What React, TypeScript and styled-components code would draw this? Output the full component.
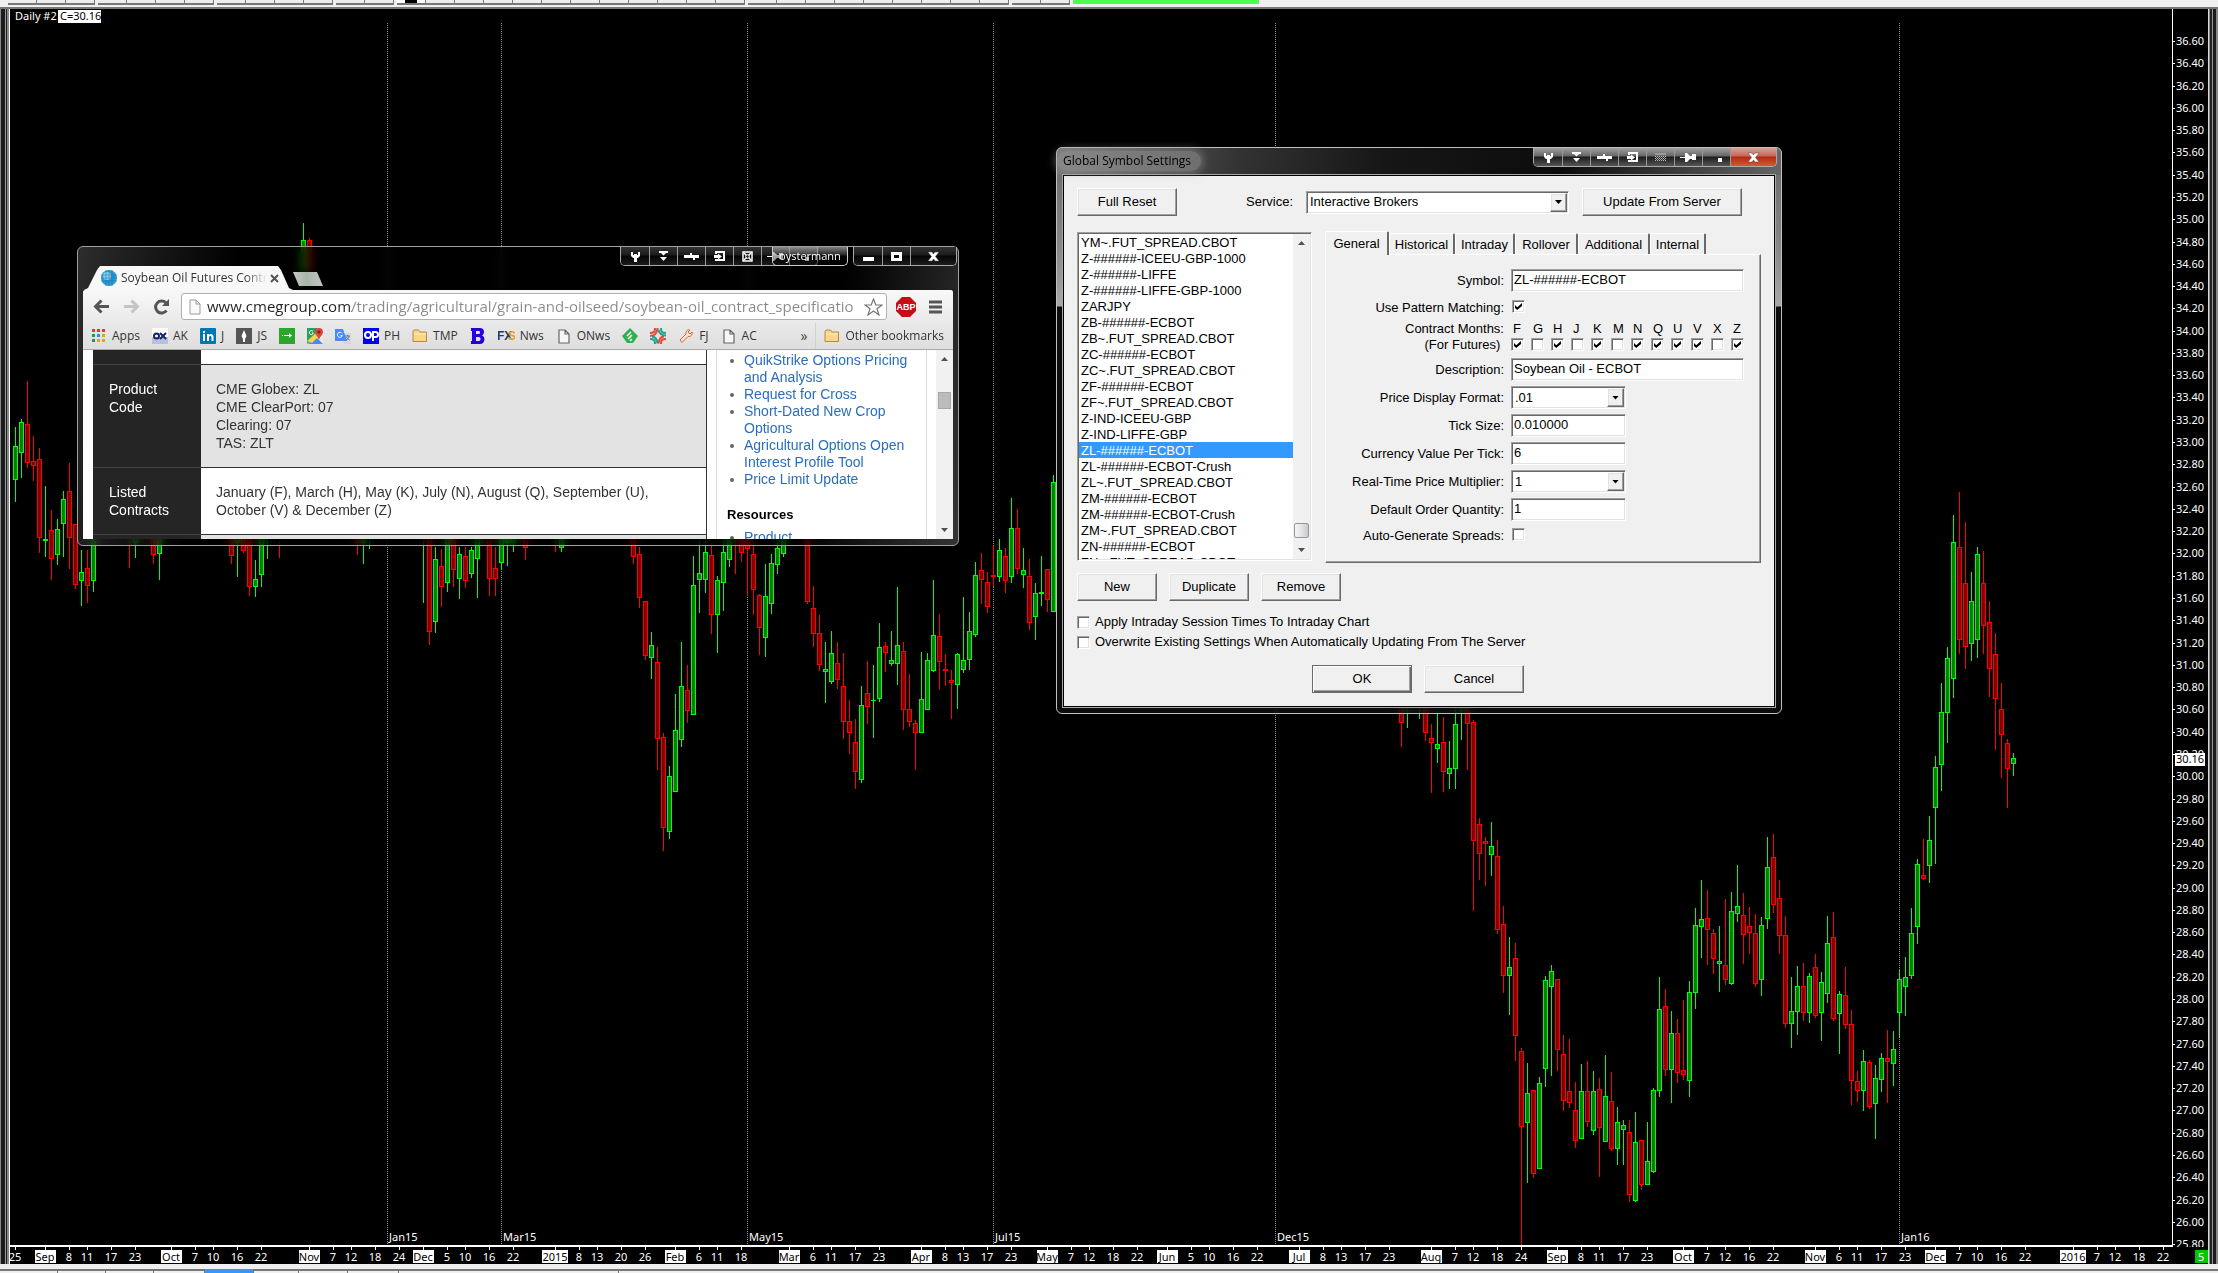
import React from "react";
import styled, { createGlobalStyle, css } from "styled-components";

const UI = `"Liberation Sans", Arial, sans-serif`;
const SEGOE = `"Open Sans", "Noto Sans", sans-serif`;
const TAHOMA = `"Noto Sans", sans-serif`;

const GlobalStyle = createGlobalStyle`
  *, *::before, *::after { box-sizing: border-box; }
  html, body, #root { height: 100%; }
  body { margin: 0; background: #000; font: 13px/16px ${UI}; color: #000; overflow: hidden; }
  button, input, select { font: inherit; color: inherit; margin: 0; padding: 0; border: 0; border-radius: 0; background: none; }
  ul { margin: 0; padding: 0; list-style: none; }
  svg { display: block; }
`;

/* ---------- chart data ---------- */

type Bar = [slot: number, up: 0 | 1, high: number, top: number, bottom: number, low: number];
type Series = { origin: number; unit: number; bars: Bar[] };

const SLOT = 6;
const slotX = (slot: number) => 5 + slot * SLOT;

const series: Series[] = [
  {
    origin: 371,
    unit: 3,
    bars: [
      [0, 1, 140, 198, 300, 366], [1, 1, 117, 126, 219, 294], [2, 0, 2, 132, 249, 264], [3, 0, 168, 243, 258, 303],
      [4, 0, 204, 237, 474, 519], [5, 1, 318, 477, 483, 531], [6, 0, 390, 450, 537, 600], [7, 1, 417, 447, 525, 555],
      [8, 1, 333, 357, 432, 531], [9, 0, 249, 333, 474, 567], [10, 0, 432, 432, 615, 627], [11, 1, 510, 576, 603, 678],
      [12, 0, 510, 564, 618, 669], [13, 1, 450, 450, 603, 636], [19, 0, 480, 480, 480, 564], [20, 1, 460, 460, 490, 534],
      [23, 0, 450, 450, 525, 552], [24, 1, 450, 450, 522, 600], [36, 0, 450, 450, 528, 552], [37, 1, 450, 450, 490, 591],
      [38, 0, 450, 450, 513, 519], [39, 0, 450, 450, 621, 648], [40, 1, 540, 597, 621, 651], [41, 1, 450, 450, 585, 621],
      [42, 1, 480, 480, 480, 537], [44, 0, 480, 480, 480, 534], [48, 1, -471, -420, -330, -300], [49, 0, -426, -420, -330, -300],
      [57, 0, 470, 470, 490, 525], [58, 1, 470, 470, 490, 552], [59, 1, 480, 480, 480, 507], [68, 1, 480, 480, 480, 669],
      [69, 0, 450, 450, 756, 795], [70, 1, 501, 537, 726, 760], [71, 0, 507, 558, 621, 681], [72, 1, 450, 450, 609, 636],
      [73, 0, 450, 450, 570, 621], [74, 1, 501, 522, 597, 657], [75, 0, 501, 528, 603, 624], [76, 1, 501, 510, 582, 594],
      [77, 1, 450, 450, 537, 654], [79, 0, 450, 450, 597, 648], [80, 0, 501, 564, 597, 648], [81, 1, 450, 450, 549, 570],
      [82, 1, 450, 450, 490, 558], [83, 1, 450, 450, 490, 516], [85, 0, 450, 450, 504, 540], [90, 0, 480, 480, 480, 516],
    ],
  },
  {
    origin: 511,
    unit: 3,
    bars: [
      [91, 1, 30, 30, 84, 96], [103, 0, 30, 30, 111, 132], [104, 0, 80, 102, 234, 264], [105, 0, 243, 243, 408, 420],
      [106, 1, 336, 375, 414, 477], [107, 0, 381, 426, 657, 750], [108, 0, 639, 651, 924, 993], [109, 1, 738, 768, 936, 957],
      [110, 1, 522, 630, 816, 816], [111, 1, 366, 498, 660, 681], [112, 0, 435, 510, 573, 609], [113, 1, 108, 195, 585, 585],
      [114, 1, 60, 159, 180, 279], [115, 1, 60, 96, 180, 219], [116, 0, 60, 105, 285, 342], [117, 1, 168, 180, 285, 399],
      [118, 1, 60, 96, 189, 273], [119, 1, 30, 30, 120, 141], [120, 0, 60, 60, 60, 162], [121, 0, 30, 30, 99, 126],
      [122, 0, 30, 30, 87, 228], [123, 0, 60, 102, 210, 285], [124, 0, 222, 225, 324, 405], [125, 1, 132, 228, 354, 411],
      [126, 1, 102, 129, 252, 282], [127, 1, 60, 84, 135, 162], [128, 1, 30, 30, 102, 111], [132, 0, 30, 30, 246, 252],
      [133, 0, 198, 264, 342, 381], [134, 0, 285, 339, 435, 453], [135, 1, 366, 447, 456, 549], [136, 1, 333, 399, 486, 492],
      [137, 0, 366, 429, 480, 507], [138, 0, 399, 498, 606, 657], [139, 0, 540, 603, 639, 702], [140, 0, 597, 666, 756, 807],
      [141, 1, 498, 555, 780, 789], [142, 0, 423, 519, 561, 612], [143, 1, 435, 540, 543, 654], [144, 1, 309, 381, 537, 546],
      [145, 0, 366, 378, 399, 456], [146, 1, 333, 420, 432, 438], [147, 1, 201, 375, 432, 495], [148, 0, 366, 393, 570, 630],
      [149, 0, 462, 567, 606, 621], [150, 0, 600, 609, 639, 750], [151, 1, 396, 537, 639, 639], [152, 1, 399, 420, 570, 570],
      [153, 1, 180, 345, 453, 456], [154, 0, 282, 348, 426, 510], [155, 0, 402, 447, 453, 498], [156, 0, 450, 480, 489, 597],
      [157, 1, 399, 402, 495, 567], [158, 1, 231, 420, 450, 459], [159, 1, 276, 333, 420, 450], [160, 1, 126, 165, 345, 351],
      [161, 0, 99, 150, 180, 252], [162, 0, 156, 186, 261, 279], [163, 0, 78, 165, 171, 201], [164, 1, 57, 90, 171, 186],
      [165, 0, 84, 108, 183, 219], [166, 1, -66, 24, 171, 189], [167, 0, -33, 24, 147, 162], [168, 1, 84, 150, 165, 204],
      [169, 0, 117, 168, 309, 330], [170, 1, 189, 219, 291, 360], [171, 1, 108, 216, 222, 258], [172, 0, 147, 147, 240, 276],
      [173, 1, -135, -114, 276, 276],
    ],
  },
  {
    origin: 681,
    unit: 2.8,
    bars: [
      [231, 0, 0, 0, 92, 160], [232, 1, 0, 0, 50, 106], [234, 1, 40, 40, 40, 80], [235, 0, 0, 0, 120, 143],
      [236, 0, 95, 134, 148, 288], [237, 1, 60, 151, 165, 204], [238, 0, 76, 146, 230, 286], [239, 1, 143, 218, 235, 277],
      [240, 1, 30, 95, 221, 277], [241, 1, 0, 0, 50, 140], [242, 0, 0, 0, 95, 224], [243, 0, 84, 90, 423, 619],
      [244, 0, 358, 375, 459, 532], [245, 0, 412, 423, 431, 549], [246, 1, 370, 437, 462, 521], [247, 0, 420, 465, 672, 683],
      [248, 0, 605, 655, 801, 848], [249, 1, 692, 776, 801, 910], [250, 0, 708, 750, 969, 1039], [251, 0, 1002, 1011, 1224, 1560],
      [252, 1, 1044, 1128, 1212, 1380], [253, 0, 1120, 1120, 1355, 1366], [254, 1, 1084, 1100, 1341, 1341], [255, 1, 801, 812, 1061, 1112],
      [256, 1, 770, 787, 832, 1081], [257, 0, 809, 809, 1008, 1067], [258, 0, 966, 1019, 1151, 1179], [259, 0, 977, 1123, 1156, 1170],
      [260, 0, 1098, 1176, 1263, 1282], [261, 1, 1047, 1123, 1257, 1257], [262, 0, 1039, 1123, 1210, 1224], [263, 1, 1067, 1123, 1235, 1246],
      [264, 0, 1086, 1117, 1226, 1364], [265, 1, 1022, 1137, 1266, 1266], [266, 0, 1070, 1151, 1285, 1291], [267, 1, 1168, 1210, 1285, 1330],
      [268, 1, 1204, 1218, 1232, 1330], [269, 0, 1204, 1238, 1414, 1434], [270, 1, 1182, 1266, 1431, 1434], [271, 0, 1260, 1260, 1386, 1400],
      [272, 1, 1210, 1319, 1386, 1386], [273, 1, 1114, 1120, 1350, 1352], [274, 1, 804, 893, 1123, 1140], [275, 0, 837, 885, 1064, 1081],
      [276, 1, 899, 960, 1064, 1156], [277, 0, 921, 960, 1072, 1100], [278, 0, 868, 1064, 1078, 1092], [279, 1, 815, 846, 1095, 1140],
      [280, 1, 610, 658, 848, 893], [281, 1, 532, 641, 664, 750], [282, 0, 560, 638, 672, 770], [283, 0, 669, 680, 753, 795],
      [284, 1, 661, 759, 767, 846], [285, 0, 585, 770, 812, 826], [286, 1, 566, 619, 823, 826], [287, 1, 490, 605, 627, 650],
      [288, 0, 568, 630, 686, 767], [289, 0, 608, 661, 680, 739], [290, 0, 627, 680, 823, 832], [291, 1, 636, 658, 812, 857],
      [292, 1, 412, 496, 641, 669], [293, 0, 403, 468, 602, 624], [294, 0, 532, 582, 689, 739], [295, 0, 633, 686, 935, 946],
      [296, 1, 804, 899, 935, 1002], [297, 1, 773, 829, 902, 966], [298, 0, 764, 829, 904, 927], [299, 1, 792, 801, 904, 932],
      [300, 0, 739, 776, 913, 918], [301, 1, 790, 818, 904, 983], [302, 1, 633, 708, 851, 876], [303, 0, 622, 692, 921, 927],
      [304, 1, 843, 851, 907, 1019], [305, 0, 776, 854, 938, 949], [306, 0, 896, 935, 1095, 1162], [307, 0, 1067, 1095, 1123, 1154],
      [308, 1, 1008, 1039, 1123, 1179], [309, 0, 1036, 1042, 1168, 1173], [310, 1, 1050, 1086, 1159, 1257], [311, 1, 1016, 1030, 1092, 1126],
      [312, 0, 952, 1030, 1042, 1156], [313, 1, 955, 1005, 1047, 1109], [314, 1, 784, 809, 904, 974], [315, 1, 748, 804, 832, 913],
      [316, 1, 610, 680, 801, 809], [317, 1, 473, 487, 664, 711], [318, 0, 417, 518, 529, 532], [319, 1, 353, 420, 493, 540],
      [320, 1, 185, 216, 330, 487], [321, 1, -20, 62, 210, 283], [322, 1, -120, -90, 64, 148], [323, 1, -490, -415, -30, 22],
      [324, 0, -554, -400, -140, -100], [325, 0, -470, -300, -120, -60], [326, 1, -330, -250, -130, -80], [327, 1, -400, -380, -140, -90],
      [328, 0, -390, -300, -180, -100], [329, 0, -250, -190, -60, 20], [330, 0, -160, -100, 25, 168], [331, 0, -20, 53, 126, 246],
      [332, 0, 137, 148, 221, 330], [333, 1, 176, 190, 207, 241],
    ],
  },
];

const gridLines: [number, string][] = [[62, "Jan15"], [81, "Mar15"], [122, "May15"], [163, "Jul15"], [210, "Dec15"], [314, "Jan16"]];

const timeLabels: [number, string][] = [
  [0, "25"], [5, "Sep"], [9, "8"], [12, "11"], [16, "17"], [20, "23"], [26, "Oct"], [30, "7"], [33, "10"], [37, "16"], [41, "22"],
  [49, "Nov"], [53, "7"], [56, "12"], [60, "18"], [64, "24"], [68, "Dec"], [72, "5"], [75, "10"], [79, "16"], [83, "22"],
  [90, "2015"], [94, "8"], [97, "13"], [101, "20"], [105, "26"], [110, "Feb"], [114, "6"], [117, "11"], [121, "18"],
  [129, "Mar"], [133, "6"], [136, "11"], [140, "17"], [144, "23"], [151, "Apr"], [155, "8"], [158, "13"], [162, "17"], [166, "23"],
  [172, "May"], [176, "7"], [179, "12"], [183, "18"], [187, "22"], [192, "Jun"], [196, "5"], [199, "10"], [203, "16"], [207, "22"],
  [214, "Jul"], [218, "8"], [221, "13"], [225, "17"], [229, "23"], [236, "Aug"], [240, "7"], [243, "12"], [247, "18"], [251, "24"],
  [257, "Sep"], [261, "8"], [264, "11"], [268, "17"], [272, "23"], [278, "Oct"], [282, "7"], [285, "12"], [289, "16"], [293, "22"],
  [300, "Nov"], [304, "6"], [307, "11"], [311, "17"], [315, "23"], [320, "Dec"], [324, "7"], [327, "10"], [331, "16"], [335, "22"],
  [343, "2016"], [347, "7"], [350, "12"], [354, "18"], [358, "22"],
];

/* ---------- chart ---------- */

const Desktop = styled.div`
  position: relative;
  min-height: 100vh;
  display: flex;
  flex-direction: column;
  background: #000;
  overflow: hidden;
`;
const ToolStrip = styled.div`
  height: 9px;
  display: flex;
  gap: 3px;
  padding: 0 8px;
  background: #f0f0f0;
  border-bottom: 2px solid #777;
  overflow: hidden;
`;
const ToolGroup = styled.div`
  display: flex;
  height: 5px;
`;
const ToolButton = styled.button<{ $pressed?: boolean }>`
  width: 29px;
  height: 5px;
  border: solid #777;
  border-width: 0 1px 2px 0;
  background: ${(p) => (p.$pressed ? "linear-gradient(90deg, #fff 8px, #000 8px 20px, #fff 20px)" : "#ededed")};
`;
const ConnectedLight = styled.div`
  width: 186px;
  height: 4px;
  background: #4dff4d;
`;
const ChartRow = styled.div`
  flex: 1;
  min-height: 0;
  display: flex;
`;
const FrameEdge = styled.div<{ $right?: boolean }>`
  width: 10px;
  flex: none;
  background: ${(p) =>
    p.$right
      ? "linear-gradient(90deg, #ddd 1px, #888 1px 2px, #222 2px 4px, #999 4px 5px, #1a1c1d 5px 8px, #888 8px)"
      : "linear-gradient(90deg, #888 1px, #1a1c1d 1px 5px, #999 5px 6px, #222 6px 7px, #888 7px 9px, #fff 9px)"};
`;
const ChartPane = styled.div`
  flex: 1;
  min-width: 0;
  display: flex;
  flex-direction: column;
`;
const PlotRow = styled.div`
  flex: 1;
  min-height: 0;
  display: flex;
`;
const Plot = styled.svg`
  flex: 1;
  min-width: 0;
  height: 100%;
  border-bottom: 2px solid #fff;
  font: 11px ${TAHOMA};
`;
const PriceScale = styled.svg`
  flex: none;
  width: 36px;
  height: 100%;
  border-left: 1px solid #fff;
  font: 11px ${TAHOMA};
`;
const TimeScale = styled.svg`
  flex: none;
  width: 100%;
  height: 17px;
  font: 11px ${TAHOMA};
`;
const TabStrip = styled.div`
  height: 9px;
  flex: none;
  display: flex;
  padding: 5px 0 0 10px;
  background: linear-gradient(#f0f0f0 5px, #777 5px 7px, #f0f0f0 7px);
`;
const StripTab = styled.button<{ $w: number; $on?: boolean }>`
  width: ${(p) => p.$w}px;
  height: 4px;
  background: ${(p) => (p.$on ? "#3399ff" : "transparent")};
  border-right: 1px solid #777;
`;

function Candles() {
  return (
    <g shapeRendering="crispEdges">
      {series.flatMap((s) =>
        s.bars.map(([slot, up, high, top, bottom, low]) => {
          const y = (v: number) => s.origin + Math.round(v / s.unit);
          const x = slotX(slot);
          const h = y(bottom) - y(top);
          return (
            <g key={slot} fill={up ? "#00ff00" : "#ff0000"}>
              <rect x={x} y={y(high)} width={1} height={y(low) - y(high)} />
              {h > 0 && <rect x={x - 2} y={y(top)} width={5} height={h} />}
              {h > 2 && <rect x={x - 1} y={y(top) + 1} width={3} height={h - 2} fill={up ? "#008000" : "#800000"} />}
            </g>
          );
        })
      )}
    </g>
  );
}

function Chart() {
  const prices = Array.from({ length: 55 }, (_, i) => 36.6 - i * 0.2);
  const priceY = (p: number) => Math.round(32 + (36.6 - p) * 111.4);
  return (
    <ChartPane>
      <PlotRow>
        <Plot>
          <text x={5} y={11} fill="#fff">Daily #2</text>
          <rect x={48} y={1} width={43} height={13} fill="#fff" />
          <text x={50} y={11}>C=30.16</text>
          {gridLines.map(([slot, label]) => (
            <g key={label}>
              <line x1={slotX(slot) + 0.5} x2={slotX(slot) + 0.5} y1={14} y2={1240} stroke="#909090" strokeDasharray="1 1" shapeRendering="crispEdges" />
              <text x={slotX(slot) + 2} y={1232} fill="#fff">{label}</text>
            </g>
          ))}
          <Candles />
        </Plot>
        <PriceScale>
          {prices.map((p) => (
            <g key={p.toFixed(2)} fill="#fff">
              <rect x={0} y={priceY(p)} width={2} height={1} />
              <text x={3} y={priceY(p) + 4}>{p.toFixed(2)}</text>
            </g>
          ))}
          <rect x={2} y={744} width={30} height={13} fill="#fff" />
          <text x={3} y={754}>30.16</text>
        </PriceScale>
      </PlotRow>
      <TimeScale>
        {timeLabels.map(([slot, label]) => {
          const boxed = label.length > 2;
          const w = label.length === 4 ? 26 : 21;
          return (
            <g key={slot}>
              <rect x={slotX(slot)} y={0} width={1} height={3} fill="#fff" />
              {boxed && <rect x={slotX(slot) - Math.floor(w / 2)} y={3} width={w} height={13} fill="#fff" />}
              <text x={slotX(slot)} y={14} textAnchor="middle" fill={boxed ? "#000" : "#fff"}>{label}</text>
            </g>
          );
        })}
        <rect x={2185} y={3} width={13} height={13} fill="#00c800" />
        <text x={2188} y={14} fill="#fff">5</text>
      </TimeScale>
    </ChartPane>
  );
}

/* ---------- window chrome ---------- */

const Glass = styled.div`
  position: absolute;
  display: flex;
  flex-direction: column;
  border: 1px solid #a0a0a0;
  border-radius: 6px;
  backdrop-filter: blur(4px);
`;
const BrowserWindow = styled(Glass)`
  left: 77px;
  top: 246px;
  width: 882px;
  height: 300px;
  padding: 0 5px 6px;
  background: linear-gradient(100deg, rgba(60, 60, 60, 0.75), rgba(0, 0, 0, 0.5) 160px 760px, rgba(70, 70, 70, 0.75));
`;
const DialogWindow = styled(Glass)`
  left: 1056px;
  top: 147px;
  width: 726px;
  height: 567px;
  padding: 0 5px 5px;
  border-color: #c0c0c0;
  background:
    linear-gradient(90deg, #777, #333 180px, #161616 330px, #0c0c0c 70%, #666) 0 0 / 100% 27px no-repeat,
    linear-gradient(#666, #888 100px, #a8a8a8 158px, rgba(16, 18, 18, 0.7) 159px);
`;
const TitleRow = styled.div<{ $h: number; $reach: number }>`
  position: relative;
  height: ${(p) => p.$h}px;
  margin-right: -${(p) => p.$reach}px;
  flex: none;
  display: flex;
  justify-content: space-between;
`;
const DialogTitle = styled.h1`
  margin: 3px 0 0 -5px;
  padding: 0 10px 0 6px;
  height: 20px;
  border-radius: 10px;
  background: rgba(150, 150, 150, 0.55);
  box-shadow: 0 0 8px 2px rgba(150, 150, 150, 0.55);
  font: 12px/20px ${SEGOE};
`;
const CaptionGroups = styled.div<{ $gap: number }>`
  display: flex;
  align-items: flex-start;
  gap: ${(p) => p.$gap}px;
`;
const CaptionGroup = styled.div`
  display: flex;
  height: 19px;
  border: 1px solid #aaa;
  border-top: 0;
  border-radius: 0 0 5px 5px;
  overflow: hidden;
`;
const CaptionButton = styled.button<{ $w: number; $tone: "dark" | "grey" | "red" }>`
  width: ${(p) => p.$w}px;
  display: grid;
  place-items: center;
  color: #fff;
  background: ${(p) =>
    p.$tone === "red"
      ? "linear-gradient(#d9a195, #c4685a 8px, #b02a12 9px, #d8563a)"
      : p.$tone === "grey"
        ? "linear-gradient(#a0a0a0, #666 8px, #1c1c1c 9px, #555)"
        : "linear-gradient(#333, #1c1c1c 8px, #050505 9px, #1c1c1c)"};
  & + & { border-left: 1px solid #999; }
`;
const ProfileSpace = styled.span`
  width: 35px;
`;
const ProfileBadge = styled.span`
  position: absolute;
  right: 109px;
  top: 0;
  width: 76px;
  height: 19px;
  border: 1px solid #ccc;
  border-top: 0;
  border-radius: 0 0 5px 5px;
  background: linear-gradient(rgba(170, 170, 170, 0.75), rgba(90, 90, 90, 0.4) 8px, rgba(0, 0, 0, 0.4) 9px);
  color: #fff;
  font: 11px/18px ${SEGOE};
  text-align: center;
`;

type GlyphName = "wrench" | "roll" | "pan" | "enter" | "move" | "shade" | "pin" | "tray" | "min" | "max" | "close";

function Glyph({ name }: { name: GlyphName }) {
  const shapes: Record<GlyphName, React.ReactNode> = {
    wrench: <path d="M2 2v4l2 2h1v4h3V8h1l2-2V2H9v3H8V1H5v4H4V2z M5 1h3v3H5z" fillRule="evenodd" fill="currentColor" />,
    roll: <path d="M2 1h9v2H9L6.500 5.500 4 3H2zM3 7h7l-3.500 4z" fill="currentColor" />,
    pan: <path d="M-1 5h6V3h2v2h7v3h-4v2H8V8H-1z" fill="currentColor" />,
    enter: <path fillRule="evenodd" d="M2 1h10v10H2V9h2v0h6V3H4v1H2zM1 5h4V3.500L9 6.500 5 9.500V8H1z" fill="currentColor" />,
    move: (
      <g fill="none" stroke="currentColor">
        <rect x="2" y="2" width="9" height="9" strokeWidth="1.500" />
        <path d="M3 3l7 7M10 3l-7 7" strokeWidth="1.500" />
        <circle cx="6.500" cy="6.500" r="1.800" fill="#222" />
      </g>
    ),
    shade: (
      <g>
        <path d="M1 2h11v2H1z" fill="#999" />
        <path d="M1 5.500h11M1 7.500h11M1 9.500h11" stroke="#bbb" strokeDasharray="1 1" />
        <path d="M2 6.500h10M2 8.500h10" stroke="#999" strokeDasharray="1 1" />
      </g>
    ),
    pin: <path d="M-2 6h5V2h2l3 3h2V3h4v6h-4V8H8l-3 3H3V7h-5z" fill="currentColor" />,
    tray: <path d="M8 7h4v4H8z" fill="currentColor" />,
    min: <path d="M1 7h11v4H1z" fill="currentColor" />,
    max: <path fillRule="evenodd" d="M1 2h11v9H1zM4 5v3h5V5z" fill="currentColor" />,
    close: <path d="M1 2h4l1.500 2L8 2h4L8.500 6.500 12 11H8L6.500 9 5 11H1l3.500-4.500z" fill="currentColor" stroke="#445" strokeWidth="0.5" />,
  };
  return (
    <svg width="13" height="13" viewBox="0 0 13 13" overflow="visible" aria-hidden="true">
      {shapes[name]}
    </svg>
  );
}

function Caption({ names, tone }: { names: GlyphName[]; tone: "dark" | "grey" }) {
  return (
    <CaptionGroup>
      {names.map((n) => (
        <CaptionButton key={n} aria-label={n} $w={n === "close" ? 46 : 28} $tone={tone}>
          <Glyph name={n} />
        </CaptionButton>
      ))}
    </CaptionGroup>
  );
}

/* ---------- browser ---------- */

const PageTab = styled.div`
  position: relative;
  align-self: flex-end;
  display: flex;
  align-items: center;
  width: 209px;
  height: 24px;
  margin-left: 1px;
  padding: 0 14px 0 17px;
  clip-path: polygon(0 100%, 4px 92%, 13px 4px, 16px 0, 194px 0, 197px 4px, 205px 92%, 100% 100%);
  background: #f8f8f8;
  font: 12px/24px ${SEGOE};
  color: #333;
`;
const PageTabTitle = styled.span`
  flex: 1;
  min-width: 0;
  margin: 0 3px 0 4px;
  overflow: hidden;
  white-space: nowrap;
  mask-image: linear-gradient(90deg, #000 85%, transparent);
`;
const NewTab = styled.button`
  width: 30px;
  height: 14px;
  align-self: flex-end;
  margin: 0 auto 4px 0;
  clip-path: polygon(0 0, 80% 0, 100% 100%, 20% 100%);
  background: linear-gradient(90deg, #c8c8c8, #a9b5a9 45%, #c4c4c4);
`;
const Client = styled.div`
  flex: 1;
  min-height: 0;
  display: flex;
  flex-direction: column;
  background: #fff;
  border-radius: 3px 3px 0 0;
  overflow: hidden;
`;
const NavBar = styled.div`
  height: 33px;
  flex: none;
  display: flex;
  align-items: center;
  gap: 13px;
  padding: 0 11px 0 10px;
  background: linear-gradient(#f8f8f8, #e9e9e9);
`;
const IconButton = styled.button`
  display: grid;
  place-items: center;
  flex: none;
`;
const Address = styled.label`
  flex: 1;
  min-width: 0;
  height: 27px;
  margin: 0 -4px 0 -2px;
  padding: 0 3px 0 7px;
  display: flex;
  align-items: center;
  gap: 6px;
  border: 1px solid #b0b0b0;
  border-radius: 3px;
  background: #fff;
`;
const AddressInput = styled.input`
  flex: 1;
  min-width: 0;
  height: 25px;
  font: 15px/25px ${SEGOE};
  outline: 0;
  color: transparent;
  background: linear-gradient(90deg, #222 145px, #8a8a8a 145px);
  background-clip: text;
  -webkit-background-clip: text;
`;
const Bookmarks = styled.nav`
  height: 27px;
  flex: none;
  display: flex;
  align-items: center;
  gap: 12px;
  padding: 0 9px;
  background: linear-gradient(#e9e9e9, #dedede);
  border-bottom: 1px solid #aaa;
`;
const Bookmark = styled.a`
  display: flex;
  align-items: center;
  gap: 5px;
  font: 12px/16px ${SEGOE};
  color: #333;
  text-decoration: none;
  white-space: nowrap;
`;
const MoreBookmarks = styled.button`
  margin-left: auto;
  font: 14px/16px ${SEGOE};
  color: #444;
`;
const BookmarkDivider = styled.span`
  width: 1px;
  height: 26px;
  margin: 0 -4px;
  background: #ccd3d8;
`;
const WebPage = styled.div`
  flex: 1;
  min-height: 0;
  display: flex;
  padding-left: 10px;
  overflow: hidden;
`;
const SpecTable = styled.table`
  flex: 1;
  height: 253px;
  margin-top: -52px;
  border-collapse: collapse;
  font: 14px/18px ${UI};
  color: #333;
  th, td { vertical-align: top; text-align: left; border-top: 1px solid #333; padding: 15px; font-weight: 400; }
  th { width: 108px; padding-left: 16px; background: #252525; color: #fff; border-color: #444; }
  td { border-right: 1px solid #333; }
`;
const SpecRow = styled.tr<{ $h: number; $shade?: boolean }>`
  height: ${(p) => p.$h}px;
  td { background: ${(p) => (p.$shade ? "#e3e3e3" : "#fff")}; }
`;
const SideBox = styled.aside`
  width: 211px;
  flex: none;
  margin: 0 9px;
  padding: 2px 11px 0 10px;
  border: solid #ddd;
  border-width: 0 1px;
  font: 14px/17px ${UI};
  overflow: hidden;
`;
const LinkList = styled.ul`
  li { position: relative; padding-left: 17px; }
  li::before { content: ""; position: absolute; left: 3px; top: 7px; width: 4px; height: 4px; border-radius: 50%; background: #666; }
  a { color: #2a6ebb; text-decoration: none; }
`;
const SideHeading = styled.h2`
  margin: 18px 0 6px;
  font: bold 13px/17px ${UI};
`;
const PageScroll = styled.div`
  width: 17px;
  flex: none;
  display: flex;
  flex-direction: column;
  align-items: center;
  background: #f1f1f1;
`;
const ScrollArrow = styled.button<{ $down?: boolean }>`
  width: 17px;
  height: 18px;
  flex: none;
  display: grid;
  place-items: center;
  &::before {
    content: "";
    width: 7px;
    height: 4px;
    background: #505050;
    clip-path: ${(p) => (p.$down ? "polygon(0 0, 100% 0, 50% 100%)" : "polygon(0 100%, 100% 100%, 50% 0)")};
  }
`;
const PageThumb = styled.div`
  width: 13px;
  height: 17px;
  margin: 24px 0 auto;
  background: #bcbcbc;
  border: 1px solid #a8a8a8;
`;

const folder = (
  <svg width="16" height="14" viewBox="0 0 16 14"><path d="M1 12V2.500L2 1h4.500l1.500 2h6.500v9.500H1z" fill="#fbd58c" stroke="#b98a3c" /><path d="M2 5h12" stroke="#fff0c8" /></svg>
);
const sheet = (
  <svg width="16" height="15" viewBox="-2 0 16 15"><path d="M1 1h6l4 4v9H1zM7 1v4h4" fill="#f6f6f6" stroke="#666" strokeWidth="1.200" /></svg>
);
const IconText = styled.text`
  font: bold 12px ${UI};
`;
const BlockerText = styled.text`
  font: bold 9px ${UI};
`;

const bookmarkItems: { id: string; label?: string; icon: React.ReactNode }[] = [
  {
    id: "apps", label: "Apps",
    icon: (
      <svg width="15" height="14" viewBox="0 0 15 14">
        {["#e33", "#e33", "#e33", "#2a8f5a", "#3b82f6", "#e9a400", "#2a8f5a", "#e9a400", "#e9a400"].map((c, i) => (
          <rect key={i} x={(i % 3) * 5} y={Math.floor(i / 3) * 5} width="3" height="3" fill={c} />
        ))}
      </svg>
    ),
  },
  { id: "ak", label: "AK", icon: <svg width="16" height="16"><rect width="16" height="9" fill="#fff" /><rect y="9" width="16" height="7" fill="#b9bfe0" /><g fill="none" stroke="#14246b" strokeWidth="2"><circle cx="4.500" cy="8" r="2.500" /><path d="M8 5l6 6M14 5l-6 6" /></g></svg> },
  { id: "in", label: "J", icon: <svg width="16" height="16"><rect width="16" height="16" rx="1" fill="#0077b5" /><path d="M3 6h2v7H3zM3 3h2v2H3zM7 6h2v1c1-1.500 4.500-1.500 4.500 2v4h-2V9.500c0-2-2.500-2-2.500 0V13H7z" fill="#fff" /></svg> },
  { id: "js", label: "JS", icon: <svg width="16" height="16"><rect width="16" height="16" fill="#555" /><path d="M8 2l2.500 6L9 11v3H7v-3L5.500 8z" fill="#fff" /></svg> },
  { id: "arrow", icon: <svg width="16" height="16"><rect width="16" height="16" fill="#2ba52b" /><path d="M3 7h1v1H3zM5 7h5V5l3 2.500L10 10V8H5z" fill="#fff" /></svg> },
  { id: "maps", icon: <svg width="16" height="16"><rect width="16" height="16" fill="#e8e8e8" /><path d="M0 0h10v7L0 16z" fill="#26a05a" /><path d="M1 16l7-8 8 8z" fill="#4a8af4" /><path d="M0 13L9 5l3 3-7 7z" fill="#fbd34c" /><path d="M12 0a4 4 0 0 1 4 4c0 3-3 4-4 8-1-4-4-5-4-8a4 4 0 0 1 4-4z" fill="#dc4437" /><circle cx="12" cy="4" r="1.500" fill="#7b2018" /><path d="M6 3.500a2 2 0 1 0 .3 1.500H5" fill="none" stroke="#fff" /></svg> },
  { id: "translate", icon: <svg width="16" height="16"><path d="M6 5h10v11h-7z" fill="#d5d8dc" /><path d="M0 1h8l4 12H0z" fill="#4a8af4" /><path d="M7 5.500a2.500 2.500 0 1 0 .3 2H5.500" fill="none" stroke="#fff" /><path d="M10 8h5M12.500 7v1M14 8c0 2-2 4-3 4M11.500 9c.5 1.500 2 2.500 3 3" stroke="#678" fill="none" /></svg> },
  { id: "ph", label: "PH", icon: <svg width="16" height="16"><rect width="16" height="16" fill="#0000f0" /><g fill="none" stroke="#fff" strokeWidth="2"><circle cx="5" cy="7" r="3" /><path d="M10 13V4h2.500a2 2 0 0 1 0 5H10" /></g></svg> },
  { id: "tmp", label: "TMP", icon: folder },
  { id: "b", icon: <svg width="16" height="16"><path fillRule="evenodd" d="M1 0h9c5 0 5 6 2 7.500 4 1.500 3 8.500-2 8.500H1v-3h1V3H1zM6 3v3h3c1.500 0 1.500-3 0-3zM6 9v4h3c2 0 2-4 0-4z" fill="#2a00d8" /></svg> },
  { id: "fxs", label: "Nws", icon: <svg width="17" height="16"><IconText x="-1" y="12" fill="#1d3a5f">FX</IconText><IconText x="10" y="12" fill="#f39a1c">S</IconText></svg> },
  { id: "onws", label: "ONws", icon: sheet },
  { id: "feed", icon: <svg width="16" height="16"><path d="M8 0l8 8-5 7H5L0 8z" fill="#2bb24c" /><path d="M5 8l4-4M6 11l4-4M8 13l2-2" stroke="#fff" strokeWidth="1.500" /></svg> },
  { id: "knot", icon: <svg width="16" height="16" fill="none" strokeWidth="2"><path d="M0 5c4 0 5-1 5-5M0 8c5 0 7-2 7.500-8" stroke="#e3483c" /><path d="M16 5c-4 0-5-1-5-5M16 7.500c-5 0-7-2-7.500-6" stroke="#21a28a" /><path d="M0 11c4 0 5 1 5 5M2 8.500c4 0 5 3 5.500 7" stroke="#21a28a" /><path d="M16 11c-4 0-5 1-5 5M14 8.500c-4 0-5 3-5.500 7" stroke="#e3483c" /></svg> },
  { id: "fj", label: "FJ", icon: <svg width="16" height="14" viewBox="-1 0 16 14"><path d="M1 11l6-6c-.5-3 2-5 4-4L9 3l2 2 2-2c1 3-1.500 5-4 4.500L3 13.500z" fill="#fbe3d6" stroke="#d8643a" /></svg> },
  { id: "ac", label: "AC", icon: sheet },
];

const sideLinks = ["QuikStrike Options Pricing and Analysis", "Request for Cross", "Short-Dated New Crop Options", "Agricultural Options Open Interest Profile Tool", "Price Limit Update"];

function Browser() {
  return (
    <BrowserWindow>
      <TitleRow $h={43} $reach={4}>
        <PageTab>
          <svg width="16" height="16" viewBox="0 0 16 16">
            <circle cx="8" cy="8" r="8" fill="#2a9bd6" />
            <circle cx="6" cy="6" r="4" fill="#8fd0f0" />
            <path d="M0 5h16M0 8h16M0 11h16M5 0v16M8 0v16M11 0v16" stroke="#1c6fa8" strokeWidth="0.5" />
          </svg>
          <PageTabTitle>Soybean Oil Futures Contr</PageTabTitle>
          <IconButton aria-label="Close tab">
            <svg width="9" height="9"><path d="M1 1l7 7M8 1L1 8" stroke="#555" strokeWidth="2" /></svg>
          </IconButton>
        </PageTab>
        <NewTab aria-label="New tab" />
        <CaptionGroups $gap={10}>
          <Caption names={["wrench", "roll", "pan", "enter", "move", "pin", "tray"]} tone="dark" />
        </CaptionGroups>
        <ProfileSpace />
        <CaptionGroups $gap={0}>
          <Caption names={["min", "max", "close"]} tone="dark" />
        </CaptionGroups>
        <ProfileBadge>oystermann</ProfileBadge>
      </TitleRow>
      <Client>
        <NavBar>
          <IconButton aria-label="Back"><svg width="17" height="15"><path d="M16 7.500H3M8.500 1.500l-6 6 6 6" fill="none" stroke="#555" strokeWidth="3" /></svg></IconButton>
          <IconButton aria-label="Forward"><svg width="17" height="15"><path d="M1 7.500h13M8.500 1.500l6 6-6 6" fill="none" stroke="#c4c4c4" strokeWidth="3" /></svg></IconButton>
          <IconButton aria-label="Reload"><svg width="17" height="16"><path d="M13.500 11.500a6 6 0 1 1-.5-7.500" fill="none" stroke="#555" strokeWidth="3" /><path d="M16 0v7H9z" fill="#555" /></svg></IconButton>
          <Address>
            <svg width="12" height="16"><path d="M1 1h6l4 4v10H1zM7 1v4h4" fill="#fafafa" stroke="#999" /></svg>
            <AddressInput aria-label="Address" defaultValue="www.cmegroup.com/trading/agricultural/grain-and-oilseed/soybean-oil_contract_specificatio" />
            <svg width="19" height="18" viewBox="0 0 19 18"><path d="M9.500 1l2.300 6H18l-5 3.700 2 6.300-5.500-4L4 17l2-6.300L1 7h6.200z" fill="#fff" stroke="#777" strokeWidth="1.200" /></svg>
          </Address>
          <IconButton aria-label="Ad blocker">
            <svg width="20" height="20">
              <path d="M6 0h8l6 6v8l-6 6H6l-6-6V6z" fill="#c70d12" />
              <BlockerText x="10" y="13" fill="#fff" textAnchor="middle">ABP</BlockerText>
            </svg>
          </IconButton>
          <IconButton aria-label="Menu"><svg width="13" height="14"><path d="M0 2h13M0 7h13M0 12h13" stroke="#555" strokeWidth="3" /></svg></IconButton>
        </NavBar>
        <Bookmarks>
          {bookmarkItems.map((b) => (
            <Bookmark key={b.id} href="#" aria-label={b.label ?? b.id}>
              {b.icon}
              {b.label}
            </Bookmark>
          ))}
          <MoreBookmarks aria-label="More bookmarks">»</MoreBookmarks>
          <BookmarkDivider />
          <Bookmark href="#">{folder}Other bookmarks</Bookmark>
        </Bookmarks>
        <WebPage>
          <SpecTable>
            <tbody>
              <SpecRow $h={66}><th /><td /></SpecRow>
              <SpecRow $h={103} $shade>
                <th scope="row">Product Code</th>
                <td>CME Globex: ZL<br />CME ClearPort: 07<br />Clearing: 07<br />TAS: ZLT</td>
              </SpecRow>
              <SpecRow $h={67}>
                <th scope="row">Listed Contracts</th>
                <td>January (F), March (H), May (K), July (N), August (Q), September (U),<br />October (V) &amp; December (Z)</td>
              </SpecRow>
              <SpecRow $h={17} $shade><th /><td /></SpecRow>
            </tbody>
          </SpecTable>
          <SideBox>
            <LinkList>
              {sideLinks.map((t) => <li key={t}><a href="#">{t}</a></li>)}
            </LinkList>
            <SideHeading>Resources</SideHeading>
            <LinkList><li><a href="#">Product</a></li></LinkList>
          </SideBox>
          <PageScroll>
            <ScrollArrow aria-label="Scroll up" />
            <PageThumb />
            <ScrollArrow aria-label="Scroll down" $down />
          </PageScroll>
        </WebPage>
      </Client>
    </BrowserWindow>
  );
}

/* ---------- settings dialog ---------- */

const raised = css`
  border: 1px solid;
  border-color: #fff #696969 #696969 #fff;
  box-shadow: inset -1px -1px #a0a0a0, inset 1px 1px #e3e3e3;
  background: #f0f0f0;
`;
const sunken = css`
  border: 1px solid;
  border-color: #a0a0a0 #fff #fff #a0a0a0;
  box-shadow: inset 1px 1px #696969, inset -1px -1px #e3e3e3;
  background: #fff;
`;
const DialogBody = styled.form`
  flex: 1;
  min-height: 0;
  display: flex;
  flex-direction: column;
  padding: 13px 14px;
  border: 1px solid #a8a8a8;
  outline: 1px solid #000;
  outline-offset: -2px;
  background: #f0f0f0;
`;
const Push = styled.button<{ $w: number; $default?: boolean }>`
  ${raised}
  width: ${(p) => p.$w}px;
  height: 28px;
  ${(p) => p.$default && css`border-color: #696969; box-shadow: inset 1px 1px #fff, inset -1px -1px #696969, inset -2px -2px #a0a0a0;`}
`;
const Row = styled.div<{ $gap: number; $top?: number; $center?: boolean; $end?: number }>`
  display: flex;
  align-items: center;
  gap: ${(p) => p.$gap}px;
  margin-top: ${(p) => p.$top ?? 0}px;
  padding-right: ${(p) => p.$end ?? 0}px;
  justify-content: ${(p) => (p.$center ? "center" : "flex-start")};
`;
const ServiceLabel = styled.label`
  margin-left: auto;
`;
const Combo = styled.span<{ $w: number }>`
  ${sunken}
  width: ${(p) => p.$w}px;
  height: 23px;
  display: flex;
  padding: 1px;
  position: relative;
`;
const ComboSelect = styled.select`
  appearance: none;
  width: 100%;
  padding: 0 20px 0 2px;
  outline: 0;
`;
const ComboArrow = styled.span`
  ${raised}
  position: absolute;
  right: 1px;
  top: 1px;
  width: 17px;
  height: 19px;
  display: grid;
  place-items: center;
  pointer-events: none;
  &::before { content: ""; width: 7px; height: 4px; background: #000; clip-path: polygon(0 0, 100% 0, 50% 100%); }
`;
const Columns = styled.div`
  display: flex;
  justify-content: space-between;
  align-items: flex-end;
  margin-top: 15px;
  height: 330px;
`;
const ListBox = styled.div`
  ${sunken}
  width: 235px;
  height: 329px;
  display: flex;
  padding: 1px;
`;
const Items = styled.ul`
  flex: 1;
  overflow: hidden;
  white-space: nowrap;
`;
const Item = styled.li<{ $on?: boolean }>`
  height: 16px;
  padding: 0 2px;
  line-height: 18px;
  ${(p) => p.$on && css`background: #3399ff; color: #fff;`}
`;
const ListThumb = styled.div`
  width: 15px;
  height: 15px;
  margin: auto 0 3px;
  border: 1px solid #979797;
  border-radius: 2px;
  background: linear-gradient(90deg, #f5f5f5, #e4e4e6 50%, #c8c9cf);
`;
const TabArea = styled.div`
  width: 436px;
  display: flex;
  flex-direction: column;
  height: 330px;
`;
const TabRow = styled.div`
  display: flex;
  align-items: flex-end;
  height: 24px;
  position: relative;
  z-index: 1;
`;
const TabButton = styled.button<{ $on?: boolean; $w: number }>`
  width: ${(p) => p.$w}px;
  height: ${(p) => (p.$on ? 24 : 21)}px;
  margin-bottom: ${(p) => (p.$on ? -1 : 0)}px;
  padding-top: ${(p) => (p.$on ? 0 : 2)}px;
  background: #f0f0f0;
  border: solid;
  border-width: 1px 2px 0 1px;
  border-color: #fff #696969 #fff #fff;
  border-radius: 2px 2px 0 0;
`;
const Panel = styled.div`
  flex: 1;
  border: 1px solid;
  border-color: #fff #696969 #696969 #fff;
  box-shadow: inset -1px -1px #a0a0a0;
  padding: 14px 16px;
  display: grid;
  grid-template-columns: 162px 1fr;
  column-gap: 7px;
  align-content: start;
`;
const FieldLabel = styled.label`
  text-align: right;
  line-height: 23px;
  white-space: nowrap;
`;
const MonthsLabel = styled.div`
  text-align: right;
  line-height: 16px;
  padding-top: 1px;
`;
const Cell = styled.div<{ $h: number }>`
  height: ${(p) => p.$h}px;
`;
const TextBox = styled.input<{ $w: number }>`
  ${sunken}
  width: ${(p) => p.$w}px;
  height: 23px;
  padding: 0 2px 2px;
  outline: 0;
`;
const Tick = styled.input`
  ${sunken}
  appearance: none;
  display: block;
  width: 13px;
  height: 13px;
  flex: none;
  &:checked::before {
    content: "";
    display: block;
    width: 7px;
    height: 7px;
    margin: 2px;
    background: #000;
    clip-path: polygon(0 28%, 32% 60%, 100% 0, 100% 42%, 32% 100%, 0 70%);
  }
`;
const TickCell = styled.div<{ $h: number }>`
  height: ${(p) => p.$h}px;
  padding: 4px 0 0 1px;
`;
const Months = styled.div`
  display: grid;
  grid-template-columns: repeat(12, 20px);
  height: 38px;
`;
const Month = styled.label`
  display: flex;
  flex-direction: column;
  gap: 1px;
  line-height: 16px;
  padding-top: 1px;
  text-indent: 2px;
`;
const CheckLine = styled.label`
  display: flex;
  align-items: center;
  gap: 5px;
  height: 20px;
`;

const symbols = [
  "YM~.FUT_SPREAD.CBOT", "Z-######-ICEEU-GBP-1000", "Z-######-LIFFE", "Z-######-LIFFE-GBP-1000", "ZARJPY", "ZB-######-ECBOT",
  "ZB~.FUT_SPREAD.CBOT", "ZC-######-ECBOT", "ZC~.FUT_SPREAD.CBOT", "ZF-######-ECBOT", "ZF~.FUT_SPREAD.CBOT", "Z-IND-ICEEU-GBP",
  "Z-IND-LIFFE-GBP", "ZL-######-ECBOT", "ZL-######-ECBOT-Crush", "ZL~.FUT_SPREAD.CBOT", "ZM-######-ECBOT", "ZM-######-ECBOT-Crush",
  "ZM~.FUT_SPREAD.CBOT", "ZN-######-ECBOT", "ZN~.FUT_SPREAD.CBOT",
];
const settingTabs: [string, number][] = [["General", 64], ["Historical", 66], ["Intraday", 60], ["Rollover", 63], ["Additional", 72], ["Internal", 56]];
const activeMonths = "FHKNQUVZ";

function ComboBox({ id, w, value }: { id: string; w: number; value: string }) {
  return (
    <Combo $w={w}>
      <ComboSelect id={id} defaultValue={value}><option>{value}</option></ComboSelect>
      <ComboArrow />
    </Combo>
  );
}

function Field({ id, label, value, wide, combo, h = 28 }: { id: string; label: string; value: string; wide?: boolean; combo?: boolean; h?: number }) {
  return (
    <>
      <FieldLabel htmlFor={id}>{label}</FieldLabel>
      <Cell $h={h}>{combo ? <ComboBox id={id} w={115} value={value} /> : <TextBox id={id} $w={wide ? 233 : 115} defaultValue={value} />}</Cell>
    </>
  );
}

function SettingsDialog() {
  return (
    <DialogWindow role="dialog" aria-label="Global Symbol Settings">
      <TitleRow $h={26} $reach={1}>
        <DialogTitle>Global Symbol Settings</DialogTitle>
        <CaptionGroup>
          {(["wrench", "roll", "pan", "enter", "shade", "pin", "tray"] as GlyphName[]).map((n) => (
            <CaptionButton key={n} type="button" aria-label={n} $w={28} $tone="grey"><Glyph name={n} /></CaptionButton>
          ))}
          <CaptionButton type="button" aria-label="Close" $w={46} $tone="red"><Glyph name="close" /></CaptionButton>
        </CaptionGroup>
      </TitleRow>
      <DialogBody onSubmit={(e) => e.preventDefault()}>
        <Row $gap={13} $end={19}>
          <Push type="button" $w={100}>Full Reset</Push>
          <ServiceLabel htmlFor="service">Service:</ServiceLabel>
          <ComboBox id="service" w={263} value="Interactive Brokers" />
          <Push type="button" $w={160}>Update From Server</Push>
        </Row>
        <Columns>
          <ListBox>
            <Items role="listbox" aria-label="Symbols">
              {symbols.map((s) => <Item key={s} role="option" aria-selected={s === "ZL-######-ECBOT"} $on={s === "ZL-######-ECBOT"}>{s}</Item>)}
            </Items>
            <PageScroll>
              <ScrollArrow type="button" aria-label="Scroll up" />
              <ListThumb />
              <ScrollArrow type="button" aria-label="Scroll down" $down />
            </PageScroll>
          </ListBox>
          <TabArea>
            <TabRow role="tablist">
              {settingTabs.map(([t, w], i) => <TabButton key={t} type="button" role="tab" aria-selected={i === 0} $on={i === 0} $w={w}>{t}</TabButton>)}
            </TabRow>
            <Panel>
              <Field id="symbol" label="Symbol:" value="ZL-######-ECBOT" wide h={27} />
              <FieldLabel htmlFor="pattern">Use Pattern Matching:</FieldLabel>
              <TickCell $h={24}><Tick id="pattern" type="checkbox" defaultChecked /></TickCell>
              <MonthsLabel>Contract Months:<br />(For Futures)&nbsp;</MonthsLabel>
              <Months>
                {"FGHJKMNQUVXZ".split("").map((m) => (
                  <Month key={m}>{m}<Tick type="checkbox" defaultChecked={activeMonths.includes(m)} /></Month>
                ))}
              </Months>
              <Field id="description" label="Description:" value="Soybean Oil - ECBOT" wide />
              <Field id="format" label="Price Display Format:" value=".01" combo />
              <Field id="tick" label="Tick Size:" value="0.010000" />
              <Field id="currency" label="Currency Value Per Tick:" value="6" />
              <Field id="multiplier" label="Real-Time Price Multiplier:" value="1" combo />
              <Field id="quantity" label="Default Order Quantity:" value="1" h={26} />
              <FieldLabel htmlFor="spreads">Auto-Generate Spreads:</FieldLabel>
              <TickCell $h={24}><Tick id="spreads" type="checkbox" /></TickCell>
            </Panel>
          </TabArea>
        </Columns>
        <Row $gap={12} $top={12}>
          <Push type="button" $w={80}>New</Push>
          <Push type="button" $w={80}>Duplicate</Push>
          <Push type="button" $w={80}>Remove</Push>
        </Row>
        <Row $gap={0} $top={11}><CheckLine><Tick type="checkbox" />Apply Intraday Session Times To Intraday Chart</CheckLine></Row>
        <Row $gap={0}><CheckLine><Tick type="checkbox" />Overwrite Existing Settings When Automatically Updating From The Server</CheckLine></Row>
        <Row $gap={12} $top={13} $center $end={2}>
          <Push type="submit" $w={100} $default>OK</Push>
          <Push type="button" $w={100}>Cancel</Push>
        </Row>
      </DialogBody>
    </DialogWindow>
  );
}

/* ---------- page ---------- */

const toolGroups = [3, 4, 4, 2, 12, 9, 2];
const stripTabs: [number, boolean?][] = [[48], [48], [48], [51], [49, true], [45], [49], [51], [220]];

export default function App() {
  return (
    <Desktop>
      <GlobalStyle />
      <ToolStrip>
        {toolGroups.map((count, g) => (
          <ToolGroup key={g}>
            {Array.from({ length: count }, (_, i) => <ToolButton key={i} aria-label={`Tool ${g + 1}.${i + 1}`} $pressed={g === 4 && i === 0} />)}
          </ToolGroup>
        ))}
        <ConnectedLight />
      </ToolStrip>
      <ChartRow>
        <FrameEdge />
        <Chart />
        <FrameEdge $right />
      </ChartRow>
      <TabStrip>
        {stripTabs.map(([w, on], i) => <StripTab key={i} aria-label={`Sheet ${i + 1}`} $w={w} $on={on} />)}
      </TabStrip>
      <Browser />
      <SettingsDialog />
    </Desktop>
  );
}
